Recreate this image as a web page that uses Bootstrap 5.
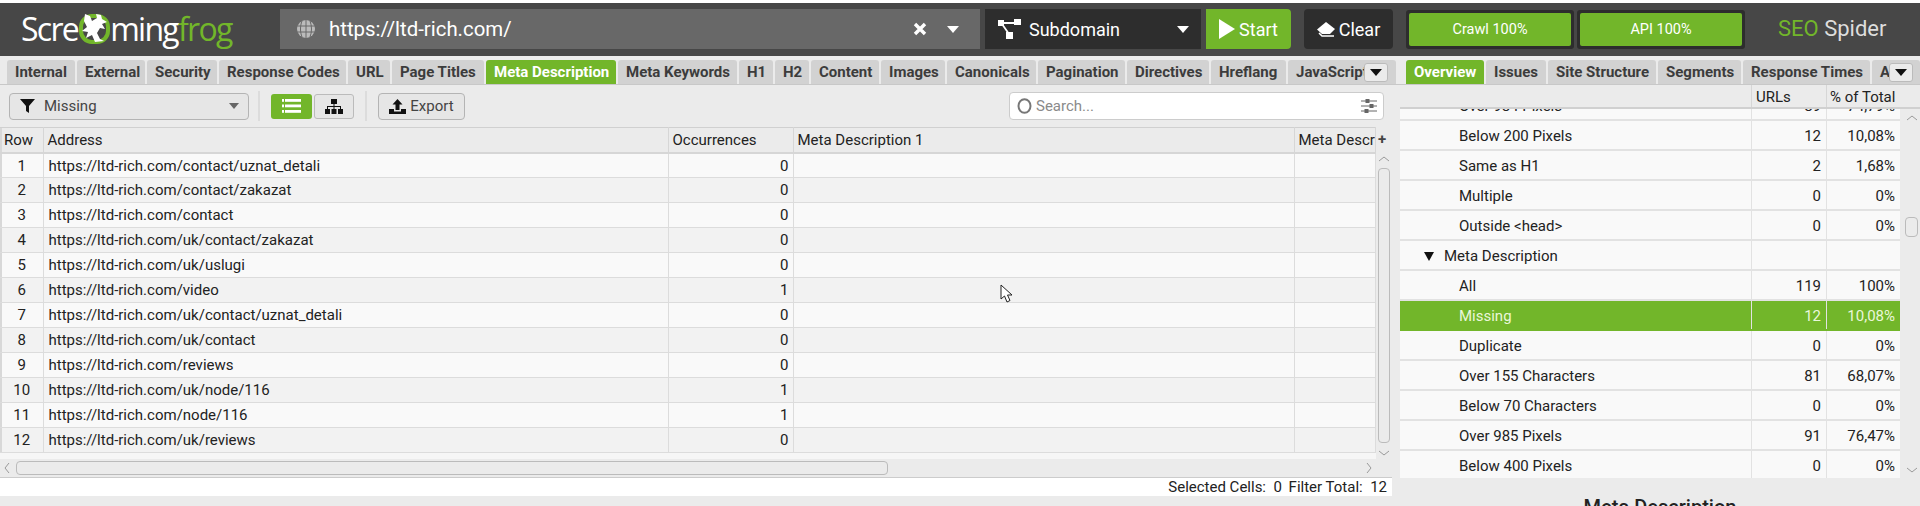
<!DOCTYPE html>
<html lang="en"><head><meta charset="utf-8"><title>SEO Spider</title>
<link href="https://cdn.jsdelivr.net/npm/bootstrap@5.3.0/dist/css/bootstrap.min.css" rel="stylesheet">
<style>
html,body{margin:0;height:506px;overflow:hidden;background:#ebebeb;}
body{font-family:Roboto,"Liberation Sans",sans-serif;font-size:15px;color:#222;}
.topbar{height:56px;background:#474747;border-top:3px solid #fff;padding:6px 0 7px 0;}
.logo-wrap{width:280px;padding-left:21px;height:40px;}
.logo-text{font-family:"Open Sans","Liberation Sans",sans-serif;font-size:32px;letter-spacing:-1.7px;color:#fff;font-weight:400;line-height:40px;}
.logo-frog{color:#72b62a;}
.logo-mark{width:32px;height:36px;flex:none;}
.urlbox{width:700px;height:40px;background:#686868;color:#fff;font-size:20.4px;padding-left:16px;}
.urlbox .urltext{margin-left:13px;flex:1;}
.urlx{margin-right:20px;}
.urlarrow{margin-right:21px;}
.modebox{width:216px;margin-left:5px;height:40px;background:#2d2d2d;color:#fff;font-size:18px;padding:0 12px 0 13px;}
.startbtn{width:85px;height:40px;margin-left:5px;background:#72b62a;color:#fff;font-size:18px;border-radius:0 4px 4px 0;}
.clearbtn{width:89px;height:40px;margin-left:13px;background:#2d2d2d;color:#fff;font-size:18px;border-radius:4px;}
.progbox{width:168px;height:39px;background:#2d2d2d;border-radius:3px;padding:3px;margin-top:1px;}
.progbox.gapa{margin-left:13px;}
.progbox.gapb{margin-left:3px;}
.progfill{background:#72b62a;color:#fff;height:100%;border-radius:2px;font-size:14.5px;}
.seospider{margin-left:33px;font-size:22px;color:#ddd;font-weight:400;line-height:40px;}
.seospider span{color:#72b62a;}
.mainrow{height:450px;}
.leftpane{width:1400px;padding-top:4px;}
.rightpane{width:520px;padding-top:4px;}
.tabbar{height:25px;border-bottom:1px solid #c8c8c8;position:relative;overflow:hidden;}
.tabx{height:24px;background:#d2d2d2;margin-right:2px;padding-left:8px;font-weight:700;font-size:15px;color:#3c3c3c;border-radius:3px 3px 0 0;line-height:25px;white-space:nowrap;overflow:hidden;flex:none;}
.tabx.act{background:#72b62a;color:#fff;}
.moretab{position:absolute;top:3px;width:24px;height:19px;background:#ebebeb;border:1px solid #bbb;border-radius:3px;}
.toolbar{height:42px;padding-right:16px;padding-left:9px;}
.filtersel{width:240px;height:27px;background:#e6e6e6;border:1px solid #b4b4b4;border-radius:4px;padding:0 9px 0 10px;color:#444;}
.filtertext{margin-left:9px;}
.sepv{width:2px;height:30px;background:#dcdcdc;margin:0 11px 0 9px;}
.viewbtn{width:41px;height:25px;border-radius:3px;background:#72b62a;margin-right:2px;}
.viewbtn.off{background:#e6e6e6;border:1px solid #bbb;width:40px;}
.exportbtn{width:87px;height:27px;background:#e6e6e6;border:1px solid #b4b4b4;border-radius:4px;color:#444;}
.searchbox{width:375px;height:28px;margin-left:auto;background:#fff;border:1px solid #ccc;border-radius:4px;padding:0 6px 0 7px;color:#8a8a8a;}
.gridwrap{position:relative;height:350px;width:1392px;background:linear-gradient(90deg,#f6f6f6 1376px,#ebebeb 1376px);}
.gridtable{border-collapse:collapse;table-layout:fixed;width:1375px;color:#222;}
.gridtable th{height:25px;font-weight:400;background:#ebebeb;border-top:1px solid #d0d0d0;border-bottom:2px solid #d6d6d6;border-right:1px solid #d6d6d6;padding:0 3px 0 4px;white-space:nowrap;overflow:hidden;}
.gridtable td{height:25px;padding:1px 4px 0 5px;border-bottom:1px solid #dcdcdc;border-right:1px solid #dcdcdc;white-space:nowrap;}
.gridtable tr:nth-child(odd) td{background:#f9f9f9;}
.gridtable tr:nth-child(even) td{background:#f2f2f2;}
.gridtable tr td:first-child,.gridtable tr th:first-child{box-shadow:inset 2px 0 0 #d8d8d8;}
.plusmark{position:absolute;left:1378px;top:2px;font-weight:700;color:#444;line-height:20px;}
.vscroll{position:absolute;left:1376px;top:25px;width:16px;height:307px;}
.vthumb{position:absolute;left:2px;top:16px;width:12px;height:275px;background:#ebebeb;border:1px solid #bbb;border-radius:4px;}
.hscroll{position:absolute;left:0;top:332px;width:1392px;height:18px;background:#ebebeb;}
.hthumb{position:absolute;left:16px;top:2px;width:872px;height:14px;background:#ebebeb;border:1px solid #bbb;border-radius:4px;}
.chev{position:absolute;}
.statusline{height:19px;width:1392px;background:#fff;border-top:1px solid #ccc;text-align:right;padding-right:5px;line-height:18px;color:#222;}
.stat-gap{margin-left:3px;}
.righthead{height:24px;background:#ebebeb;border-bottom:2px solid #d0d0d0;width:520px;line-height:25px;}
.rh-a{width:351px;}
.rh-b{width:75px;border-left:1px solid #d6d6d6;padding-left:4px;}
.rh-c{width:74px;border-left:1px solid #d6d6d6;padding-left:3px;}
.rtable-wrap{position:relative;height:369px;width:520px;overflow:hidden;background:#f9f9f9;}
.rrow{height:30px;border-bottom:2px solid #e2e2e2;width:500px;flex:none;}
.rrow.clip{height:12px;overflow:hidden;align-items:flex-start;}
.rrow.clip>div{margin-top:-18px;height:30px;flex:none;}
.rcell-a{width:351px;padding-left:59px;}
.rcell-b{width:75px;border-left:1px solid #e2e2e2;text-align:right;padding-right:5px;}
.rcell-c{width:74px;border-left:1px solid #e2e2e2;text-align:right;padding-right:5px;}
.rrow.sel{background:#72b62a;color:#eaf7da;border-bottom-color:#72b62a;}
.rrow>div{line-height:31px;}
.rcell-h{padding-left:24px;}
.rcell-h svg{margin-right:10px;vertical-align:0;}
.rsb{position:absolute;right:0;top:0;width:20px;height:369px;background:#ebebeb;}
.rthumb{position:absolute;left:5px;top:108px;width:13px;height:20px;background:#ebebeb;border:1px solid #bbb;border-radius:4px;}
.rbottom{text-align:center;font-size:20px;font-weight:500;color:#222;line-height:24px;margin-top:17px;height:30px;}
.cursor-mark{position:absolute;left:1000px;top:284px;width:12px;height:19px;}
</style></head><body>
<div class="topbar d-flex">
 <div class="logo-wrap d-flex align-items-center"><span class="logo-text">Scre</span>
  <svg class="logo-mark" viewBox="0 0 32 36"><rect x="3" y="5" width="27" height="26" rx="11" fill="none" stroke="#72b62a" stroke-width="4"/><path d="M7 3l5 2 2 5 5-3-1-4 5 1 1 4 5 3-5 2 3 5-5-1-3 5 3 6 4 2-9 1-3-7-6 3 2-6-6-1 5-4-3-6z" fill="#fff"/></svg>
  <span class="logo-text">ming<span class="logo-frog">frog</span></span></div>
 <div class="urlbox d-flex align-items-center">
  <svg width="20" height="20" viewBox="0 0 20 20"><circle cx="10" cy="10" r="9" fill="#bbb"/><path d="M1 7h18M1 13h18M10 1v18M6 2c-2 5-2 11 0 16M14 2c2 5 2 11 0 16" stroke="#686868" stroke-width="1" fill="none"/></svg>
  <span class="urltext">https://ltd-rich.com/</span>
  <svg class="urlx" width="14" height="14" viewBox="0 0 14 14"><path d="M2 2l10 10M12 2L2 12" stroke="#fff" stroke-width="3.4"/></svg>
  <svg class="urlarrow" width="12" height="7" viewBox="0 0 12 7"><path d="M0 0h12L6 7z" fill="#fff"/></svg>
 </div>
 <div class="modebox d-flex align-items-center">
  <svg width="23" height="20" viewBox="0 0 23 20"><rect x="0" y="1" width="6" height="6" fill="#fff"/><rect x="16" y="0" width="7" height="6" fill="#fff"/><rect x="8" y="13" width="7" height="7" fill="#fff"/><path d="M4 4h14M4 5l7 10" stroke="#fff" stroke-width="1.8"/></svg>
  <span class="ms-2 flex-grow-1">Subdomain</span>
  <svg width="12" height="7" viewBox="0 0 12 7"><path d="M0 0h12L6 7z" fill="#fff"/></svg>
 </div>
 <div class="startbtn d-flex align-items-center justify-content-center"><svg width="16" height="20" viewBox="0 0 16 20"><path d="M0 0l16 10L0 20z" fill="#fff"/></svg><span class="ms-1">Start</span></div>
 <div class="clearbtn d-flex align-items-center justify-content-center"><svg width="18" height="15" viewBox="0 0 18 15"><path d="M9 0l9 7-5 5H5L0 7.500z" fill="#fff"/><path d="M2 11l3 3h12" stroke="#fff" stroke-width="1.500" fill="none"/></svg><span class="ms-1">Clear</span></div>
 <div class="progbox gapa"><div class="progfill d-flex align-items-center justify-content-center">Crawl 100%</div></div>
 <div class="progbox gapb"><div class="progfill d-flex align-items-center justify-content-center">API 100%</div></div>
 <div class="seospider"><span>SEO</span> Spider</div>
</div>
<div class="d-flex mainrow">
 <div class="leftpane">
  <div class="tabbar d-flex" id="ltabs"></div>
  <div class="toolbar d-flex align-items-center">
   <div class="filtersel d-flex align-items-center"><svg width="15" height="14" viewBox="0 0 15 14"><path d="M0 0h15L9 7v7L6 12V7z" fill="#111"/></svg><span class="filtertext flex-grow-1">Missing</span><svg width="10" height="6" viewBox="0 0 10 6"><path d="M0 0h10L5 6z" fill="#666"/></svg></div>
   <div class="sepv"></div>
   <div class="viewbtn d-flex align-items-center justify-content-center"><svg width="19" height="14" viewBox="0 0 19 14" fill="#fff"><rect width="2" height="2.800"/><rect x="3" width="16" height="2.800"/><rect y="5.500" width="2" height="2.800"/><rect x="3" y="5.500" width="16" height="2.800"/><rect y="11" width="2" height="2.800"/><rect x="3" y="11" width="16" height="2.800"/></svg></div>
   <div class="viewbtn off d-flex align-items-center justify-content-center"><svg width="18" height="15" viewBox="0 0 18 15" fill="#111"><rect x="6" y="0" width="6" height="5"/><rect x="0" y="10" width="5" height="5"/><rect x="6.500" y="10" width="5" height="5"/><rect x="13" y="10" width="5" height="5"/><path d="M2 10V7h14v3h-1V8H9.500v2h-1V8H3v2zM8.500 5h1v3h-1z"/></svg></div>
   <div class="sepv"></div>
   <div class="exportbtn d-flex align-items-center justify-content-center"><svg width="17" height="15" viewBox="0 0 17 15" fill="#111"><path d="M8.500 0l5 5.500h-3V11h-4V5.500h-3zM0 10h5v2.500h7V10h5v5H0z"/></svg><span class="ms-1">Export</span></div>
   <div class="searchbox d-flex align-items-center"><svg width="15" height="16" viewBox="0 0 15 16"><ellipse cx="7.500" cy="8" rx="6" ry="6.800" fill="none" stroke="#777" stroke-width="2"/></svg><span class="ms-1 flex-grow-1">Search...</span><svg width="16" height="16" viewBox="0 0 16 16" stroke="#666" fill="#666"><path d="M0 3h16M0 8h16M0 13h16" stroke-width="1"/><rect x="5" y="1.500" width="3" height="3"/><rect x="9" y="6.500" width="3" height="3"/><rect x="4" y="11.500" width="3" height="3"/></svg></div>
  </div>
  <div class="gridwrap">
   <table class="gridtable"><colgroup><col style="width:43px"><col style="width:625px"><col style="width:125px"><col style="width:501px"><col style="width:81px"></colgroup>
   <thead><tr><th>Row</th><th>Address</th><th>Occurrences</th><th>Meta Description 1</th><th>Meta Descr</th></tr></thead>
   <tbody id="lrows"></tbody></table>
   <span class="plusmark">+</span>
   <div class="vscroll"><svg class="chev" style="left:3px;top:4px" width="10" height="6" viewBox="0 0 10 6"><path d="M0 5l5-4 5 4" stroke="#999" fill="none"/></svg><div class="vthumb"></div><svg class="chev" style="left:3px;top:298px" width="10" height="6" viewBox="0 0 10 6"><path d="M0 1l5 4 5-4" stroke="#999" fill="none"/></svg></div>
   <div class="hscroll"><svg class="chev" style="left:4px;top:4px" width="6" height="10" viewBox="0 0 6 10"><path d="M5 0L1 5l4 5" stroke="#999" fill="none"/></svg><div class="hthumb"></div><svg class="chev" style="left:1366px;top:4px" width="6" height="10" viewBox="0 0 6 10"><path d="M1 0l4 5-4 5" stroke="#999" fill="none"/></svg></div>
  </div>
  <div class="statusline">Selected Cells:&nbsp; 0 <span class="stat-gap">Filter Total:&nbsp; 12</span></div>
 </div>
 <div class="rightpane">
  <div class="tabbar d-flex" id="rtabs"></div>
  <div class="righthead d-flex"><div class="rh-a"></div><div class="rh-b">URLs</div><div class="rh-c">% of Total</div></div>
  <div class="rtable-wrap" id="rtable"></div>
  <div class="rbottom">Meta Description</div>
 </div>
</div>
<svg class="cursor-mark" viewBox="0 0 12 19"><path d="M1 1v14l3.500-3 2.500 6 3-1.500-2.500-5.500H12z" fill="#fff" stroke="#222" stroke-width="1"/></svg>
<script>
var lt=[["Internal",60],["External",60],["Security",62],["Response Codes",119],["URL",34],["Page Titles",84],["Meta Description",122,1],["Meta Keywords",111],["H1",26],["H2",26],["Content",60],["Images",56],["Canonicals",81],["Pagination",79],["Directives",74],["Hreflang",67],["JavaScript",100]];
var rt=[["Overview",70,1],["Issues",52],["Site Structure",100],["Segments",75],["Response Times",119],["A",40]];
function tabs(id,arr,left,start){var el=document.getElementById(id);el.style.paddingLeft=start+'px';arr.forEach(function(t){var d=document.createElement('div');d.className='tabx'+(t[2]?' act':'');d.style.width=(t[1]+8)+'px';d.textContent=t[0];el.appendChild(d);});var m=document.createElement('div');m.className='moretab d-flex align-items-center justify-content-center';m.style.left=left+'px';m.innerHTML='<svg width="12" height="7" viewBox="0 0 12 7"><path d="M0 0h12L6 7z" fill="#111"/></svg>';el.appendChild(m);}
tabs('ltabs',lt,1364,7);tabs('rtabs',rt,489,6);
var a=[["contact/uznat_detali",0],["contact/zakazat",0],["contact",0],["uk/contact/zakazat",0],["uk/uslugi",0],["video",1],["uk/contact/uznat_detali",0],["uk/contact",0],["reviews",0],["uk/node/116",1],["node/116",1],["uk/reviews",0]];
document.getElementById('lrows').innerHTML=a.map(function(r,i){return '<tr><td class="text-center">'+(i+1)+'</td><td>https://ltd-rich.com/'+r[0]+'</td><td class="text-end">'+r[1]+'</td><td></td><td></td></tr>';}).join('');
var rr=[["Over 984 Pixels","89","74,79%","clip"],["Below 200 Pixels","12","10,08%"],["Same as H1","2","1,68%"],["Multiple","0","0%"],["Outside &lt;head&gt;","0","0%"],['<svg width="10" height="9" viewBox="0 0 10 9"><path d="M0 0h10L5 9z" fill="#111"/></svg>Meta Description',"","","h"],["All","119","100%"],["Missing","12","10,08%","sel"],["Duplicate","0","0%"],["Over 155 Characters","81","68,07%"],["Below 70 Characters","0","0%"],["Over 985 Pixels","91","76,47%"],["Below 400 Pixels","0","0%"]];
document.getElementById('rtable').innerHTML=rr.map(function(r){return '<div class="rrow d-flex '+(r[3]||'')+'"><div class="rcell-a'+(r[3]=='h'?' rcell-h':'')+'">'+r[0]+'</div><div class="rcell-b">'+r[1]+'</div><div class="rcell-c">'+r[2]+'</div></div>';}).join('')+'<div class="rsb"><svg class="chev" style="left:7px;top:6px" width="10" height="6" viewBox="0 0 10 6"><path d="M0 5l5-4 5 4" stroke="#999" fill="none"/></svg><div class="rthumb"></div><svg class="chev" style="left:7px;top:358px" width="10" height="6" viewBox="0 0 10 6"><path d="M0 1l5 4 5-4" stroke="#999" fill="none"/></svg></div>';
</script>
<script src="https://cdn.jsdelivr.net/npm/bootstrap@5.3.0/dist/js/bootstrap.bundle.min.js"></script>
</body></html>
